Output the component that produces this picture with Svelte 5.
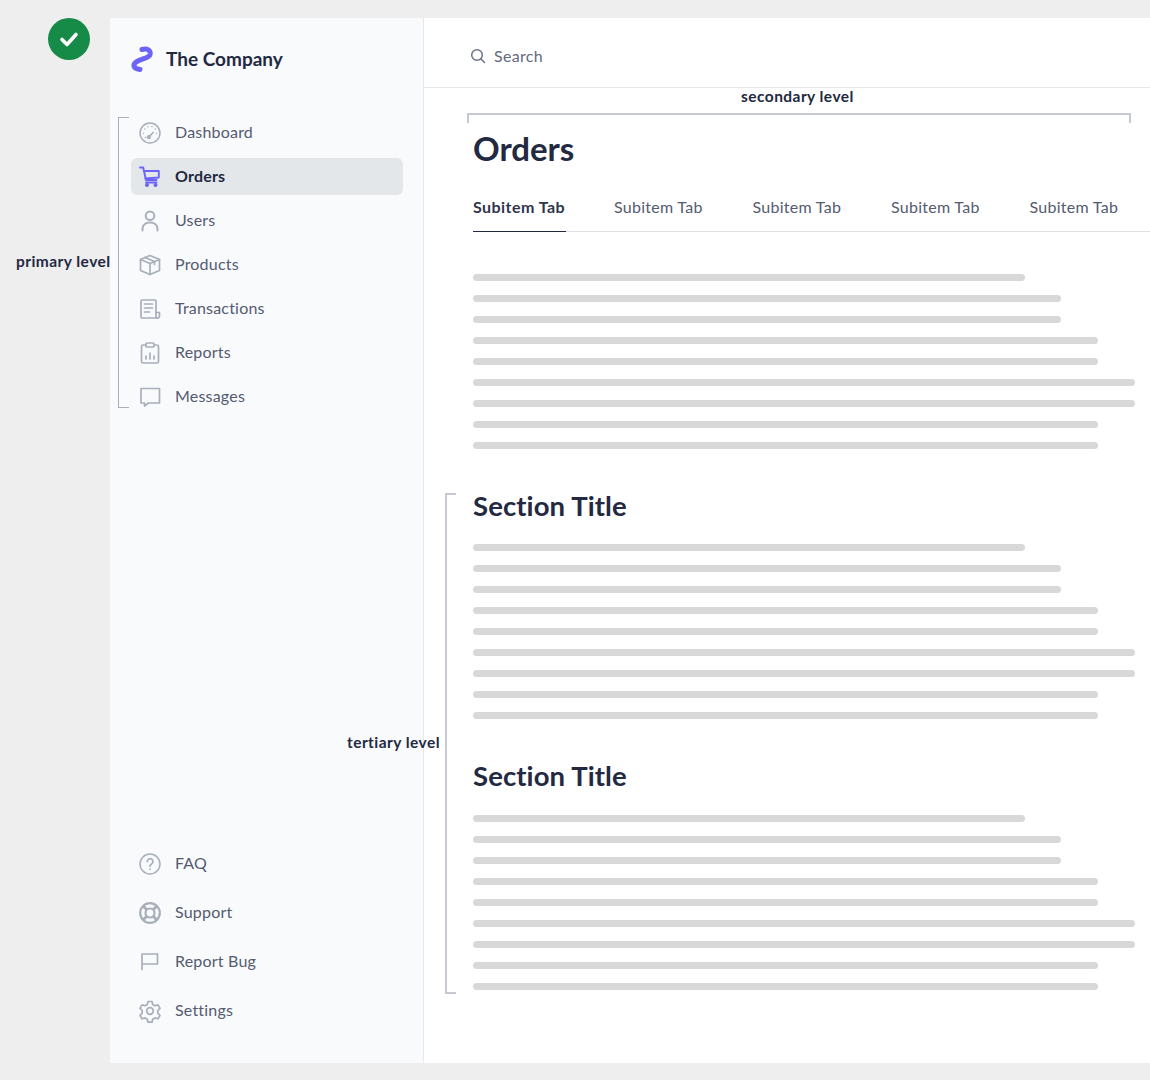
<script>
  const topNav = [
    { label: "Dashboard", icon: "gauge" },
    { label: "Orders", icon: "cart", active: true },
    { label: "Users", icon: "user" },
    { label: "Products", icon: "box" },
    { label: "Transactions", icon: "receipt" },
    { label: "Reports", icon: "report" },
    { label: "Messages", icon: "message" },
  ];
  const bottomNav = [
    { label: "FAQ", icon: "faq" },
    { label: "Support", icon: "support" },
    { label: "Report Bug", icon: "flag" },
    { label: "Settings", icon: "gear" },
  ];
  const tabs = ["Subitem Tab", "Subitem Tab", "Subitem Tab", "Subitem Tab", "Subitem Tab"];
  const lines = [552, 588, 588, 625, 625, 662, 662, 625, 625];
</script>

{#snippet icon(name)}
  <svg class="nav-icon" viewBox="0 0 24 24" fill="none" stroke="currentColor" stroke-width="1.7" stroke-linecap="round" stroke-linejoin="round">
    {#if name === "gauge"}
      <circle cx="12" cy="12" r="10" stroke-width="1.500" />
      <path d="M7.500 16.500l.01 0M5.500 12.500l.01 0M6.800 8l.01 0M10 5.800l.01 0M14 5.800l.01 0M17.300 8l.01 0M18.500 12.500l.01 0" stroke-width="1.400" />
      <path d="M11 16l4-4.500" />
      <circle cx="10.800" cy="16.200" r="1.300" />
    {:else if name === "cart"}
      <path d="M2 2.500h3.200l2.800 12.500h10.500" stroke-width="1.900" />
      <path d="M5.800 6h15v6.500l-13.500 1" stroke-width="1.900" />
      <path d="M8 17.500h10.500" stroke-width="1.900" />
      <circle cx="9" cy="20" r="2" fill="currentColor" stroke="none" />
      <circle cx="17.500" cy="20" r="2" fill="currentColor" stroke="none" />
    {:else if name === "user"}
      <circle cx="12" cy="6.800" r="4.300" stroke-width="2" />
      <path d="M4.500 21.500v-1.500c0-4 3-6.500 7.500-6.500s7.500 2.500 7.500 6.500v1.500" stroke-width="2" />
    {:else if name === "box"}
      <path d="M12 2.500l9.500 4v11l-9.500 4-9.500-4v-11z" />
      <path d="M2.500 6.500l9.500 4 9.500-4M12 10.500v11M7 4.500l9.500 4v3" />
    {:else if name === "receipt"}
      <path d="M18 15.500v-11.500a1 1 0 0 0-1-1h-13a1 1 0 0 0-1 1v16a1 1 0 0 0 1 1h15" />
      <path d="M18 15.500h3.500v3.500a2 2 0 0 1-3.500 1.400zM6.500 7h8M6.500 11h8M6.500 15h5" />
    {:else if name === "report"}
      <rect x="3.500" y="4" width="17" height="18" rx="1.500" />
      <rect x="8" y="2" width="8" height="4" rx="1" fill="#f9fafc" />
      <path d="M8 18v-3M12 18v-6M16 18v-3" />
    {:else if name === "message"}
      <path d="M3 3.500h18.500v14.500h-11l-4 3v-3h-3.500z" />
    {:else if name === "faq"}
      <circle cx="12" cy="12" r="10" stroke-width="1.500" />
      <path d="M9.300 9.500a2.800 2.800 0 1 1 4.300 2.400c-1 .6-1.600 1.200-1.600 2.300" />
      <path d="M12 17.200l.01 0" />
    {:else if name === "support"}
      <circle cx="12" cy="12" r="9.800" stroke-width="2.200" />
      <circle cx="12" cy="12" r="4.500" stroke-width="2.200" />
      <path d="M5 5l3.800 3.800M19 5l-3.800 3.800M5 19l3.800-3.800M19 19l-3.800-3.800" stroke-width="2.800" stroke-linecap="butt" />
    {:else if name === "flag"}
      <path d="M4 19.500v-15.500h15.500v10h-15.500" />
    {:else if name === "gear"}
      <path d="M10 2.500h4l.7 3 2.300 1.300 3-.9 2 3.500-2.200 2.100v2.700l2.200 2.100-2 3.500-3-.9-2.300 1.300-.7 3h-4l-.7-3-2.300-1.300-3 .9-2-3.500 2.200-2.100v-2.700l-2.200-2.100 2-3.500 3 .9 2.300-1.300z" />
      <circle cx="12" cy="12" r="3.300" />
    {/if}
  </svg>
{/snippet}

{#snippet nav(items)}
  {#each items as item}
    <a class="nav-item" class:active={item.active} href="#top">
      {@render icon(item.icon)}
      <span>{item.label}</span>
    </a>
  {/each}
{/snippet}

{#snippet filler()}
  <div class="filler">
    {#each lines as width}
      <div class="filler-line" style="width: {width}px"></div>
    {/each}
  </div>
{/snippet}

<div class="page">
  <div class="status">
    <svg viewBox="0 0 42 42" width="42" height="42">
      <circle cx="21" cy="21" r="21" fill="#168a47" />
      <path d="M14 21.500l5 5 9-10" fill="none" stroke="#fff" stroke-width="3.600" stroke-linecap="round" stroke-linejoin="round" />
    </svg>
  </div>

  <div class="frame">
    <aside class="sidebar">
      <div class="brand">
        <svg class="logo" viewBox="0 0 24 28" width="24" height="28">
          <path d="M12 4.500C17 3 20.500 5 20.200 9C19.800 13 12 13.500 7 16.500C2.500 19.300 2.500 23.500 10 24.500" fill="none" stroke="#6c63f7" stroke-width="5" stroke-linecap="round" />
        </svg>
        <span>The Company</span>
      </div>
      <nav class="nav-top">{@render nav(topNav)}</nav>
      <nav class="nav-bottom">{@render nav(bottomNav)}</nav>
    </aside>

    <main class="content">
      <header class="search">
        <svg viewBox="0 0 16 16" width="16" height="16" fill="none" stroke="#6a7283" stroke-width="1.500" stroke-linecap="round">
          <circle cx="7" cy="7" r="5.300" />
          <path d="M11 11l3.500 3.500" />
        </svg>
        <span>Search</span>
      </header>

      <div class="body">
        <h1>Orders</h1>
        <div class="tabs">
          {#each tabs as tab, i}
            <div class="tab" class:current={i === 0}>{tab}</div>
          {/each}
        </div>
        {@render filler()}
        <h2>Section Title</h2>
        {@render filler()}
        <h2>Section Title</h2>
        {@render filler()}
      </div>
    </main>
  </div>

  <!-- annotations drawn over the mockup -->
  <div class="note note-primary">primary level</div>
  <div class="note note-secondary">secondary level</div>
  <div class="note note-tertiary">tertiary level</div>
  <div class="bracket bracket-primary"></div>
  <div class="bracket bracket-secondary"></div>
  <div class="bracket bracket-tertiary"></div>
</div>

<style>
  :global(body) {
    background: #eeeeee;
    font-family: Lato, "Open Sans", sans-serif;
    font-variant-ligatures: none;
  }

  .page {
    position: relative;
    width: 1150px;
    height: 1080px;
    overflow: hidden;
    padding: 18px 0 17px 110px;
    box-sizing: border-box;
  }

  .status {
    position: absolute;
    left: 48px;
    top: 18px;
    width: 42px;
    height: 42px;
  }

  .frame {
    display: flex;
    height: 100%;
    background: #fff;
  }

  .sidebar {
    width: 314px;
    flex: none;
    box-sizing: border-box;
    display: flex;
    flex-direction: column;
    background: #f9fafc;
    border-right: 1px solid #e6e8ec;
    padding: 0 20px 0 21px;
  }

  .brand {
    display: flex;
    align-items: center;
    gap: 12px;
    height: 28px;
    margin-top: 27px;
    margin-left: -1px;
    font-size: 19px;
    font-weight: 700;
    color: #232941;
  }

  .brand span {
    padding-bottom: 2px;
  }

  .logo {
    flex: none;
  }

  .nav-top {
    display: flex;
    flex-direction: column;
    margin-top: 41px;
  }

  .nav-bottom {
    display: flex;
    flex-direction: column;
    gap: 12px;
    margin-top: auto;
    margin-bottom: 34px;
  }

  .nav-item {
    display: flex;
    align-items: center;
    gap: 13px;
    height: 37px;
    padding-left: 7px;
    border-radius: 6px;
    font-size: 16px;
    letter-spacing: 0.2px;
    color: #545b70;
    text-decoration: none;
  }

  .nav-item span {
    padding-bottom: 2px;
  }

  .nav-top .nav-item {
    margin-bottom: 7px;
  }

  .nav-item.active {
    background: #e4e7ea;
    color: #232941;
    font-weight: 700;
  }

  .nav-icon {
    width: 24px;
    height: 24px;
    flex: none;
    color: #a8afbb;
  }

  .active .nav-icon {
    color: #6c63f7;
  }

  .content {
    flex: 1;
    min-width: 0;
  }

  .search {
    display: flex;
    align-items: center;
    gap: 8px;
    height: 70px;
    box-sizing: border-box;
    border-bottom: 1px solid #e6e8ec;
    padding: 5px 0 0 46px;
    font-size: 16px;
    letter-spacing: 0.3px;
    color: #626a7c;
  }

  .search svg {
    margin-top: 1px;
  }

  .body {
    padding: 42px 0 0 49px;
  }

  h1 {
    margin: 0;
    font-size: 33px;
    line-height: 36px;
    font-weight: 700;
    color: #232941;
  }

  h2 {
    margin: 0;
    font-size: 27.500px;
    letter-spacing: 0.1px;
    line-height: 32px;
    font-weight: 700;
    color: #232941;
  }

  .tabs {
    display: flex;
    gap: 49px;
    margin-top: 29px;
    border-bottom: 1px solid #dfe1e6;
  }

  .tab {
    width: 89.500px;
    flex: none;
    height: 36px;
    box-sizing: border-box;
    padding-top: 1px;
    font-size: 16px;
    letter-spacing: 0.27px;
    line-height: 22px;
    color: #545b70;
    white-space: nowrap;
  }

  .tab.current {
    width: 93px;
    margin-right: -1px;
    font-weight: 700;
    letter-spacing: 0.45px;
    color: #2f354d;
    border-bottom: 1px solid #232941;
    margin-bottom: -1px;
    height: 37px;
  }

  .filler {
    display: flex;
    flex-direction: column;
    gap: 14px;
  }

  h2 + .filler {
    margin-top: 22.400px;
  }

  .filler + h2 {
    margin-top: 41px;
  }

  .tabs + .filler {
    margin-top: 42px;
  }

  .filler-line {
    height: 7px;
    border-radius: 4px;
    background: #d8d8d8;
  }

  .note {
    position: absolute;
    font-size: 15.500px;
    letter-spacing: 0.45px;
    line-height: 18px;
    font-weight: 700;
    color: #232941;
    white-space: nowrap;
  }

  .note-primary {
    left: 16px;
    top: 252px;
  }

  .note-secondary {
    left: 741px;
    top: 87px;
  }

  .note-tertiary {
    left: 347px;
    top: 733px;
  }

  .bracket {
    position: absolute;
    box-sizing: border-box;
    border: 2px solid #c6c9d3;
  }

  .bracket-primary {
    left: 118px;
    top: 117px;
    width: 11px;
    height: 291px;
    border-right: 0;
    border-width: 1px;
    border-color: #a9aebd;
  }

  .bracket-secondary {
    left: 467px;
    top: 113px;
    width: 664px;
    height: 10px;
    border-bottom: 0;
  }

  .bracket-tertiary {
    left: 445px;
    top: 493px;
    width: 11px;
    height: 501px;
    border-right: 0;
  }
</style>
